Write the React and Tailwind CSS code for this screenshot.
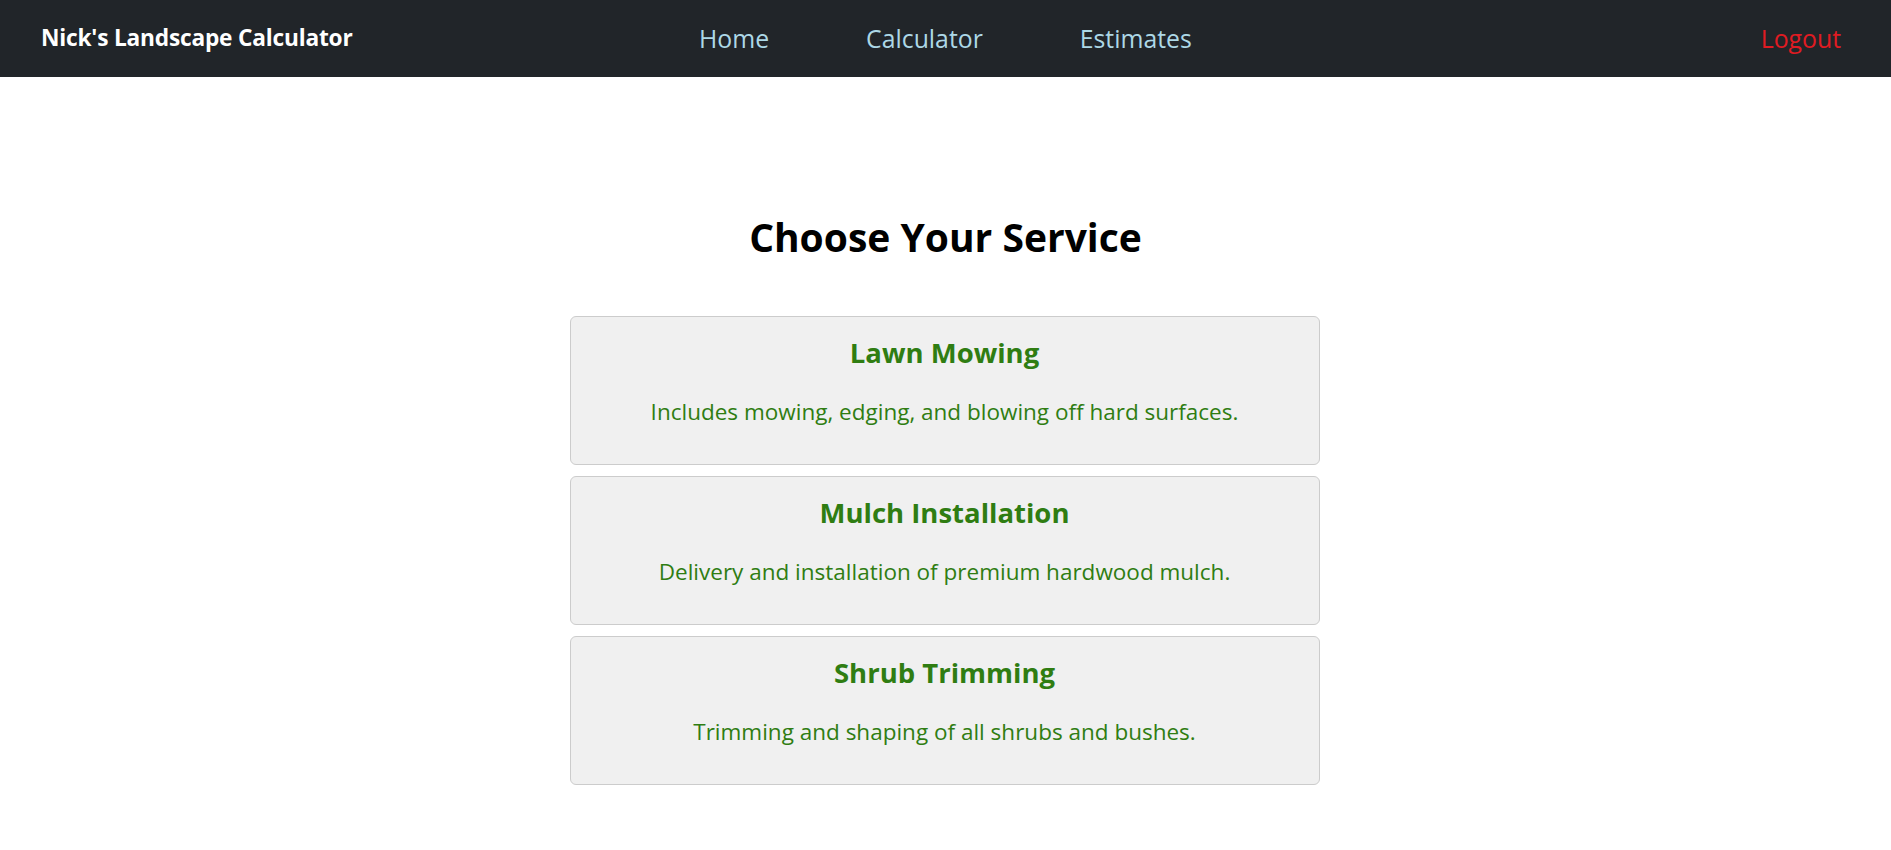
const services = [
  {
    title: "Lawn Mowing",
    text: "Includes mowing, edging, and blowing off hard surfaces.",
  },
  {
    title: "Mulch Installation",
    text: "Delivery and installation of premium hardwood mulch.",
  },
  {
    title: "Shrub Trimming",
    text: "Trimming and shaping of all shrubs and bushes.",
  },
];

function App() {
  return (
    <div className="min-h-screen bg-white font-['Open_Sans',sans-serif]">
      {/* Navbar */}
      <nav className="h-[77px] bg-[#212529] flex items-center pl-[41px] pr-[50px]">
        <span className="w-[311px] whitespace-nowrap text-white font-bold text-[22.7px] tracking-[-0.2px]">
          Nick's Landscape Calculator
        </span>
        <div className="flex items-center gap-[97px] ml-[347px]">
          <a className="text-[#add8e6] text-[24.8px]">Home</a>
          <a className="text-[#add8e6] text-[24.8px]">Calculator</a>
          <a className="text-[#add8e6] text-[24.8px]">Estimates</a>
        </div>
        <a className="ml-auto text-[#e01b22] text-[24.8px]">Logout</a>
      </nav>

      {/* Contenuto */}
      <main className="flex flex-col items-center pt-[136px]">
        <h1 className="text-[39px] font-bold text-black leading-[48px] mb-[55px]">
          Choose Your Service
        </h1>

        <div className="w-[750px] -translate-x-px flex flex-col gap-[11px]">
          {services.map((s) => (
            <div
              key={s.title}
              className="h-[149px] bg-[#f0f0f0] border border-[#cccccc] rounded-[6px] text-center text-[#2f7d12] pt-[18px]"
            >
              <h3 className="text-[27.5px] font-bold leading-[36px]">{s.title}</h3>
              <p className="text-[22.5px] leading-[30px] mt-[26px]">{s.text}</p>
            </div>
          ))}
        </div>
      </main>
    </div>
  );
}

export default App;
